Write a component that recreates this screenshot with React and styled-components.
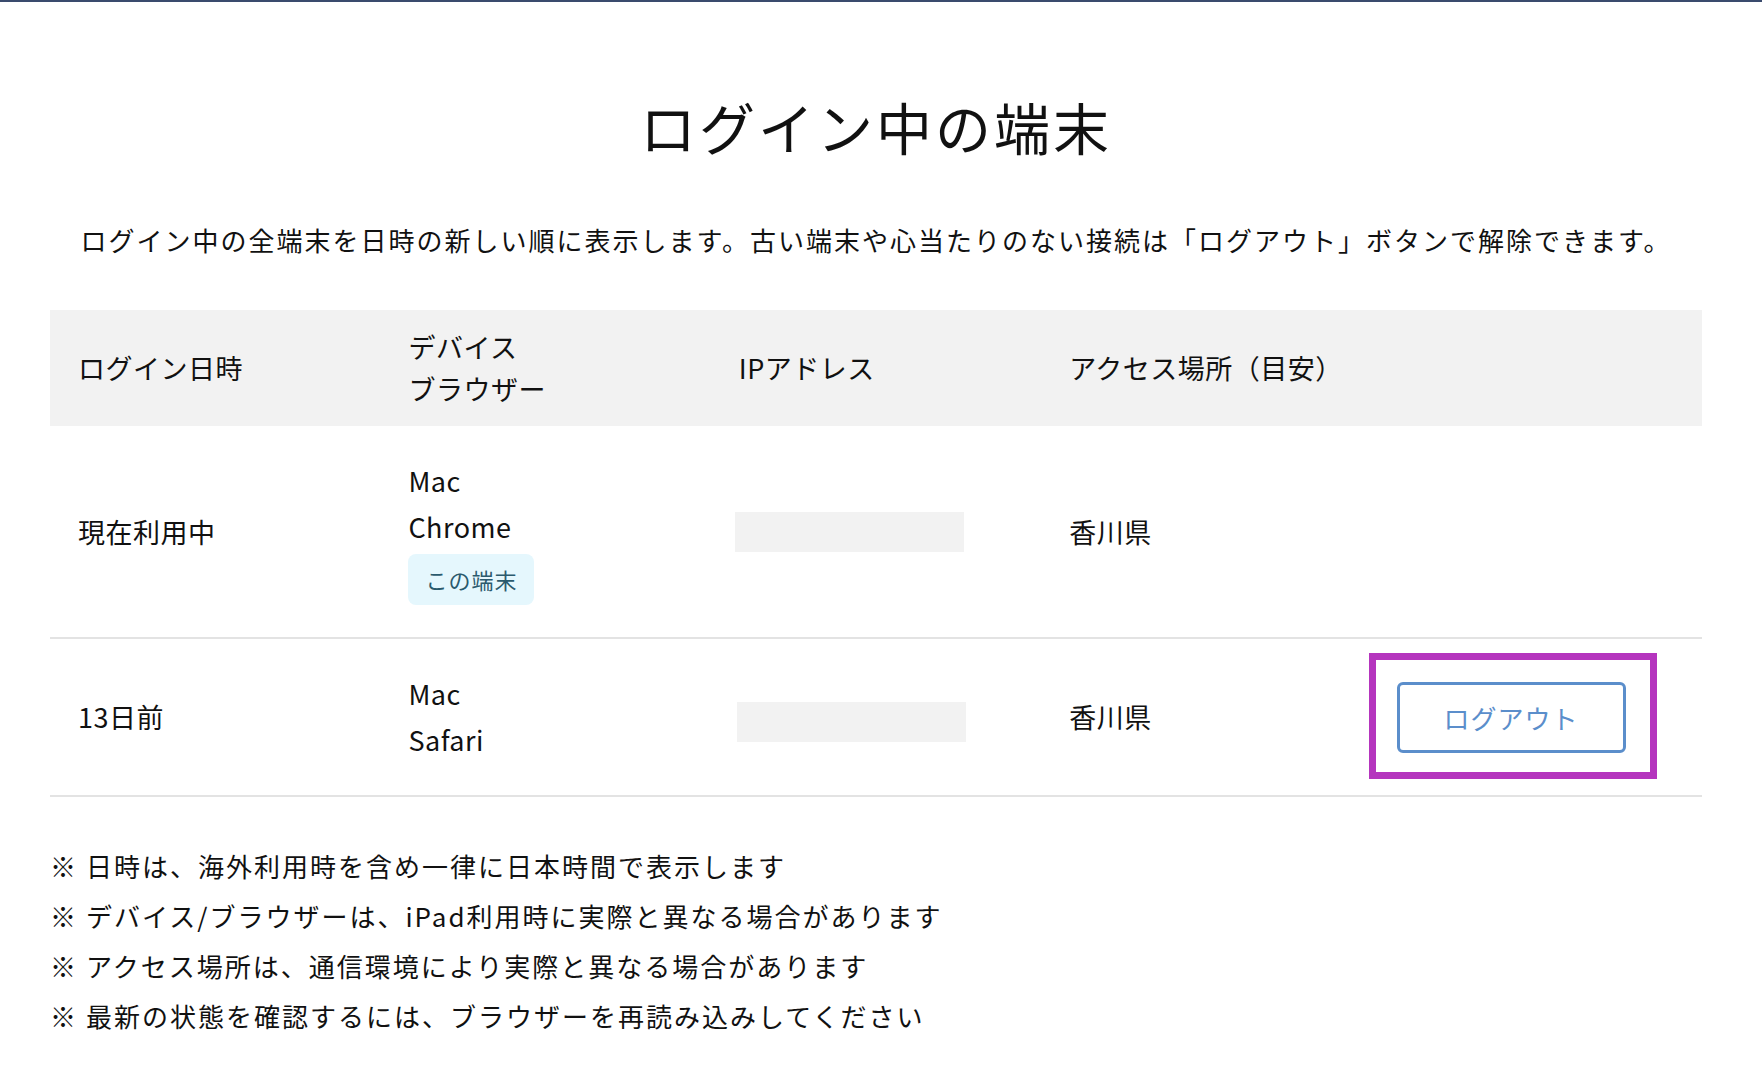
import React from 'react';
import styled, { createGlobalStyle } from 'styled-components';

const GlobalStyle = createGlobalStyle`
  html, body {
    margin: 0;
    padding: 0;
    background: #ffffff;
  }
  body {
    font-family: "Noto Sans CJK JP", "Noto Sans", sans-serif;
    color: #111111;
  }
`;

const devices = [
  {
    id: 1,
    when: '現在利用中',
    device: 'Mac',
    browser: 'Chrome',
    place: '香川県',
    current: true,
  },
  {
    id: 2,
    when: '13日前',
    device: 'Mac',
    browser: 'Safari',
    place: '香川県',
    current: false,
  },
];

const notes = [
  '日時は、海外利用時を含め一律に日本時間で表示します',
  'デバイス/ブラウザーは、iPad利用時に実際と異なる場合があります',
  'アクセス場所は、通信環境により実際と異なる場合があります',
  '最新の状態を確認するには、ブラウザーを再読み込みしてください',
];

const App = () => {
  return (
    <>
      <GlobalStyle />
      <TopBar />
      <Page>
        <Title>ログイン中の端末</Title>
        <Lead>
          ログイン中の全端末を日時の新しい順に表示します。古い端末や心当たりのない接続は「ログアウト」ボタンで解除できます。
        </Lead>

        <Table>
          <HeadRow>
            <Cell>ログイン日時</Cell>
            <Cell>
              <Line $h={42}>デバイス</Line>
              <Line $h={42}>ブラウザー</Line>
            </Cell>
            <Cell>IPアドレス</Cell>
            <Cell>アクセス場所（目安）</Cell>
            <Cell />
          </HeadRow>

          {devices.map((d) => (
            <BodyRow key={d.id}>
              <Cell>{d.when}</Cell>
              <Cell>
                <Line>{d.device}</Line>
                <Line>{d.browser}</Line>
                {d.current && <Badge>この端末</Badge>}
              </Cell>
              <Cell>
                <IpMask $current={d.current} />
              </Cell>
              <Cell>{d.place}</Cell>
              <Cell>
                {!d.current && (
                  <ButtonWrap>
                    <LogoutButton type="button">ログアウト</LogoutButton>
                    <Highlight />
                  </ButtonWrap>
                )}
              </Cell>
            </BodyRow>
          ))}
        </Table>

        <Notes>
          {notes.map((n) => (
            <Note key={n}>
              <Mark>※</Mark>
              {n}
            </Note>
          ))}
        </Notes>
      </Page>
    </>
  );
};

const TopBar = styled.div`
  height: 2px;
  background: #3a4b6d;
`;

const Page = styled.main`
  padding: 0 60px 80px 50px;
`;

const Title = styled.h1`
  margin: 85px 0 0;
  text-align: center;
  font-size: 56px;
  line-height: 78px;
  font-weight: 400;
  letter-spacing: 3px;
`;

const Lead = styled.p`
  margin: 55px 0 0;
  text-align: center;
  font-size: 26px;
  line-height: 40px;
  letter-spacing: 2px;
`;

const Table = styled.div`
  margin-top: 50px;
`;

const Row = styled.div`
  display: grid;
  grid-template-columns: repeat(5, 1fr);
  align-items: center;
  font-size: 27px;
  letter-spacing: 0.5px;
`;

const HeadRow = styled(Row)`
  height: 116px;
  background: #f2f2f2;
  line-height: 42px;
`;

const BodyRow = styled(Row)`
  padding: 32px 0;
  border-bottom: 2px solid #e3e3e3;
  line-height: 46px;
`;

const Cell = styled.div`
  padding: 0 28px;
  display: flex;
  flex-direction: column;
  align-items: flex-start;
`;

const Line = styled.div`
  line-height: ${(p) => (p.$h ? `${p.$h}px` : '46px')};
`;

const Badge = styled.span`
  margin-top: 4px;
  height: 51px;
  padding: 0 17px;
  border-radius: 8px;
  background: #e5f7fd;
  color: #2b5a6d;
  font-size: 22px;
  line-height: 51px;
  letter-spacing: 1px;
`;

/* masked IP address; older sessions sit a touch lower in the source */
const IpMask = styled.div`
  width: 229px;
  height: 40px;
  margin-left: ${(p) => (p.$current ? '-4px' : '-2px')};
  margin-top: ${(p) => (p.$current ? '0' : '10px')};
  background: #f2f2f2;
`;

const ButtonWrap = styled.span`
  position: relative;
  display: inline-block;
  margin-left: -3px;
`;

const LogoutButton = styled.button`
  display: block;
  width: 229px;
  height: 71px;
  border: 3px solid #5b8ecb;
  border-radius: 6px;
  background: #ffffff;
  color: #5b8ecb;
  font-family: inherit;
  font-size: 26px;
  letter-spacing: 1px;
  cursor: pointer;
`;

const Highlight = styled.span`
  position: absolute;
  top: -29px;
  left: -28px;
  right: -31px;
  bottom: -26px;
  border: 7px solid #b535be;
  pointer-events: none;
`;

const Notes = styled.ul`
  list-style: none;
  margin: 44px 0 0;
  padding: 0;
`;

const Note = styled.li`
  font-size: 26px;
  line-height: 50px;
  letter-spacing: 2px;
`;

const Mark = styled.span`
  margin-right: 8px;
`;

export default App;
